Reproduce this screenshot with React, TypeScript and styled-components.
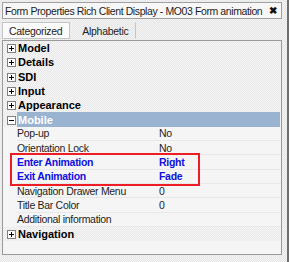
import styled, { createGlobalStyle } from "styled-components";

const GlobalStyle = createGlobalStyle`
  html, body { margin: 0; padding: 0; }
  body {
    width: 289px;
    height: 262px;
    overflow: hidden;
    font-family: "Liberation Sans", Arial, sans-serif;
    background: repeating-conic-gradient(#e6e6e6 0 25%, #f3f3f3 0 50%) 0 0 / 2px 2px;
  }
`;

type Row =
  | { kind: "cat"; label: string; open?: boolean; selected?: boolean }
  | { kind: "prop"; label: string; value?: string; hot?: boolean };

const rows: Row[] = [
  { kind: "cat", label: "Model" },
  { kind: "cat", label: "Details" },
  { kind: "cat", label: "SDI" },
  { kind: "cat", label: "Input" },
  { kind: "cat", label: "Appearance" },
  { kind: "cat", label: "Mobile", open: true, selected: true },
  { kind: "prop", label: "Pop-up", value: "No" },
  { kind: "prop", label: "Orientation Lock", value: "No" },
  { kind: "prop", label: "Enter Animation", value: "Right", hot: true },
  { kind: "prop", label: "Exit Animation", value: "Fade", hot: true },
  { kind: "prop", label: "Navigation Drawer Menu", value: "0" },
  { kind: "prop", label: "Title Bar Color", value: "0" },
  { kind: "prop", label: "Additional information" },
  { kind: "cat", label: "Navigation" },
];

function Toggle({ open }: { open?: boolean }) {
  return (
    <svg width="9" height="9" viewBox="0 0 9 9">
      <rect x="0.5" y="0.5" width="8" height="8" fill="#fff" stroke="#808080" />
      <path d="M2 4.5h5" stroke="#000" />
      {!open && <path d="M4.5 2v5" stroke="#000" />}
    </svg>
  );
}

export default function App() {
  return (
    <>
      <GlobalStyle />
      <Window>
        <TitleBar>
          <TitleText>Form Properties Rich Client Display - MO03 Form animation</TitleText>
          <Close>✖</Close>
        </TitleBar>
        <Tabs>
          <Tab $active>Categorized</Tab>
          <Tab>Alphabetic</Tab>
        </Tabs>
        <Grid>
          {rows.map((r, i) => {
            if (r.kind === "cat") {
              return (
                <CatRow key={i}>
                  <ToggleCell>
                    <Toggle open={r.open} />
                  </ToggleCell>
                  <CatLabel $selected={r.selected}>{r.label}</CatLabel>
                </CatRow>
              );
            }
            return (
              <PropRow key={i}>
                <PropName $hot={r.hot}>{r.label}</PropName>
                <PropValue $hot={r.hot}>{r.value}</PropValue>
              </PropRow>
            );
          })}
          <Highlight />
        </Grid>
      </Window>
    </>
  );
}

const Window = styled.div`
  position: relative;
  width: 289px;
  height: 262px;
  box-sizing: border-box;
  padding: 2px 5px 0 2px;
  border-right: 2px solid #6e6e6e;
  display: flex;
  flex-direction: column;
`;

const TitleBar = styled.div`
  height: 17px;
  box-sizing: border-box;
  border: 1px solid #a0a0a0;
  background: #f7f7f7;
  display: flex;
  align-items: center;
  justify-content: space-between;
  padding: 0 4px 0 2px;
`;

const TitleText = styled.span`
  font-size: 10.5px;
  letter-spacing: -0.4px;
  color: #1e1e1e;
  white-space: nowrap;
`;

const Close = styled.span`
  font-size: 10px;
  font-weight: bold;
  color: #111;
`;

const Tabs = styled.div`
  display: flex;
  align-items: flex-end;
  gap: 5px;
  margin-top: 2px;
  height: 18px;
`;

const Tab = styled.div<{ $active?: boolean }>`
  height: 17px;
  box-sizing: border-box;
  padding: 0 7px 0 6px;
  display: flex;
  align-items: center;
  font-size: 10.5px;
  letter-spacing: -0.3px;
  color: #222;
  background: ${(p) => (p.$active ? "#fbfbfb" : "transparent")};
  border: 1px solid ${(p) => (p.$active ? "#c4c4c4" : "transparent")};
  border-right-color: #c4c4c4;
`;

const Grid = styled.div`
  position: relative;
  margin-top: 1px;
  height: 215px;
  box-sizing: border-box;
  border: 1px solid #9a9a9a;
  background: #f5f5f5;
`;

const CatRow = styled.div`
  height: 14.3px;
  display: flex;
  align-items: center;
  background: repeating-conic-gradient(#e9e9e9 0 25%, #f5f5f5 0 50%) 0 0 / 2px 2px;
`;

const ToggleCell = styled.div`
  width: 13px;
  display: flex;
  justify-content: flex-end;
  padding-right: 1px;
  padding-top: 1px;
`;

const CatLabel = styled.div<{ $selected?: boolean }>`
  flex: 1;
  align-self: stretch;
  display: flex;
  align-items: center;
  padding-left: 1px;
  font-size: 11px;
  font-weight: bold;
  color: ${(p) => (p.$selected ? "#ffffff" : "#000")};
  background: ${(p) => (p.$selected ? "#9ab3d1" : "transparent")};
  margin-right: 1px;
`;

const PropRow = styled.div`
  height: 14.3px;
  display: flex;
  align-items: center;
  box-sizing: border-box;
  border-bottom: 1px solid #e8e8e8;
  margin-left: 14px;
`;

const PropName = styled.div<{ $hot?: boolean }>`
  width: 142px;
  font-size: 10.5px;
  letter-spacing: -0.3px;
  color: ${(p) => (p.$hot ? "#1010e0" : "#1e1e1e")};
  font-weight: ${(p) => (p.$hot ? "bold" : "normal")};
  white-space: nowrap;
`;

const PropValue = styled(PropName)`
  width: auto;
`;

const Highlight = styled.div`
  position: absolute;
  left: 7px;
  top: 112px;
  width: 190px;
  height: 33px;
  box-sizing: border-box;
  border: 2px solid #ee1c24;
  pointer-events: none;
`;
